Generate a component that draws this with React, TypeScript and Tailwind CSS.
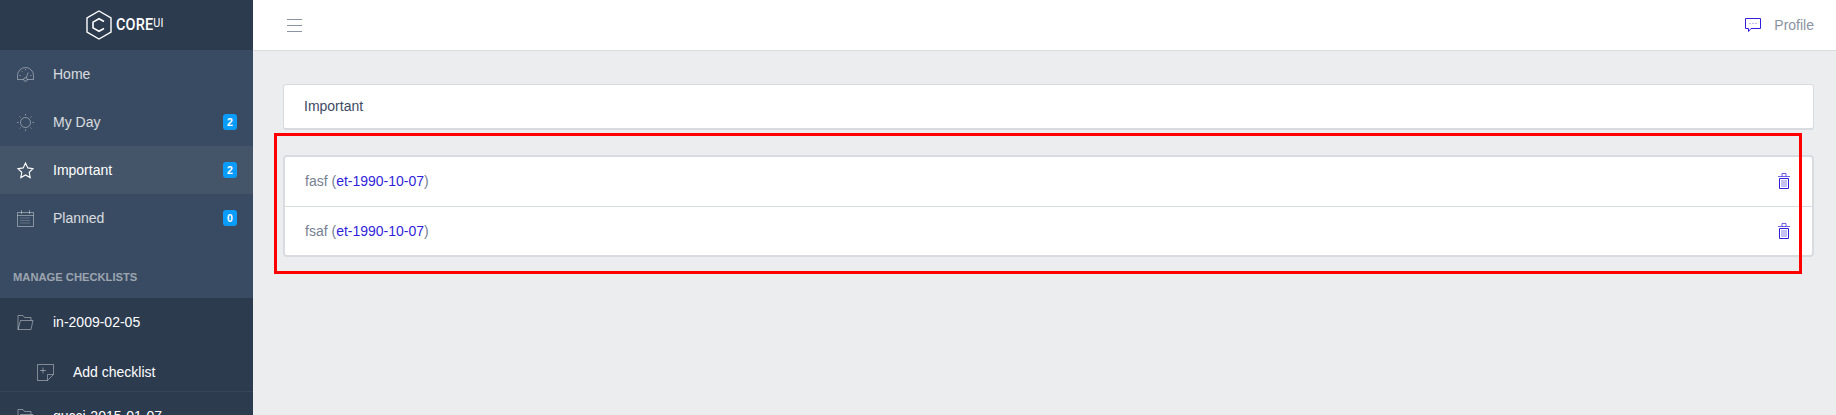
const iconClass = 'w-[17px] h-[17px] shrink-0';

function IconSpeedometer() {
  return (
    <svg viewBox="0 0 17 17" fill="none" stroke="currentColor" strokeWidth="1" className={iconClass}>
      <path d="M.5 13.5v-4a8 8 0 0 1 16 0v4H10.3M6.7 13.5H.5" />
      <circle cx="8.5" cy="13.5" r="1.8" />
      <path d="M9.2 11.8l2-5.3M2.5 9.5h1.2M13.3 9.5h1.2M4.5 5l.8.8M8.5 3v1.2" />
    </svg>
  );
}

function IconSun() {
  return (
    <svg viewBox="0 0 17 17" fill="none" stroke="currentColor" strokeWidth="1" className={iconClass}>
      <circle cx="8.5" cy="8.5" r="5" />
      <path d="M8.5 0v1.5M8.5 15.5V17M0 8.5h1.5M15.5 8.5H17M2.5 2.5l1 1M13.5 13.5l1 1M2.5 14.5l1-1M13.5 3.5l1-1" />
    </svg>
  );
}

function IconStar() {
  return (
    <svg viewBox="0 0 17 17" fill="none" stroke="currentColor" strokeWidth="1.1" className={iconClass}>
      <path d="M8.5 1l2.3 4.9 5.3.7-3.9 3.7 1 5.3-4.7-2.6-4.7 2.6 1-5.3L.9 6.6l5.3-.7z" />
    </svg>
  );
}

function IconCalendar() {
  return (
    <svg viewBox="0 0 17 17" fill="none" stroke="currentColor" strokeWidth="1" className={iconClass}>
      <path d="M.5 2.5h16v14H.5zM4.5 0v4M12.5 0v4M.5 5.5h16" />
      <path d="M3.5 8h10M3.5 10.5h10M3.5 13h10" strokeDasharray="1 1" />
    </svg>
  );
}

function IconFolder() {
  return (
    <svg viewBox="0 0 17 17" fill="none" stroke="currentColor" strokeWidth="1" className={iconClass}>
      <path d="M1 15.5V1.5h5l1.5 2H14V6.5" />
      <path d="M1 15.5h13L16 6.5H3.5z" />
    </svg>
  );
}

function IconNote() {
  return (
    <svg viewBox="0 0 17 17" fill="none" stroke="currentColor" strokeWidth="1" className={iconClass}>
      <path d="M10.5 16.5H.5V.5h16v10z" />
      <path d="M10.5 16.5v-6h6M6 3.5v6M3 6.5h6" />
    </svg>
  );
}

function IconTrash() {
  return (
    <svg viewBox="0 0 12 16" fill="none" stroke="#321fdb" strokeWidth="1" className="w-3 h-4 block">
      <path d="M0 3.5h12M4 3.5V.5h4v3" strokeOpacity="0.7" />
      <path d="M1.5 5.5h9v10h-9z" />
      <path d="M4 7v7M6 7v7M8 7v7" strokeOpacity="0.55" />
    </svg>
  );
}

function NavItem({ icon, label, badge, active }: { icon: React.ReactNode; label: string; badge?: number; active?: boolean }) {
  return (
    <div className={`h-12 shrink-0 flex items-center pl-[17px] pr-4 ${active ? 'bg-[#445569] text-white' : 'text-white/80'}`}>
      <span className={active ? 'text-white' : 'text-white/40'}>{icon}</span>
      <span className="ml-[19px] flex-1">{label}</span>
      {badge !== undefined && (
        <span className="w-3.5 h-4 rounded-[3px] bg-[#0a9cfb] text-white text-[10.5px] font-bold flex items-center justify-center">{badge}</span>
      )}
    </div>
  );
}

const todos = ['fasf', 'fsaf'];

export default function App() {
  return (
    <div className="relative flex h-[415px] overflow-hidden bg-[#ebedef] text-sm font-['Liberation_Sans',Arial,sans-serif]">
      <aside className="w-[253px] shrink-0 bg-[#394b62] flex flex-col">
        <div className="h-[50px] shrink-0 bg-[#2d3b4f] flex items-center justify-center text-white">
          <svg viewBox="0 0 26 30" fill="none" stroke="currentColor" className="w-[26px] h-[30px]">
            <path d="M13 1l12 7v14l-12 7-12-7V8z" strokeWidth="1.4" />
            <path d="M18 11.5l-5-2.8-6 3.4v5.8l6 3.4 5-2.8" strokeWidth="1.6" />
          </svg>
          <span className="ml-1 font-['Roboto',sans-serif] font-medium text-[16px] tracking-[0.2px] scale-x-90 origin-left w-[52px] whitespace-nowrap">
            CORE<span className="text-[12px] font-normal align-[3px]">UI</span>
          </span>
        </div>
        <NavItem icon={<IconSpeedometer />} label="Home" />
        <NavItem icon={<IconSun />} label="My Day" badge={2} />
        <NavItem icon={<IconStar />} label="Important" badge={2} active />
        <NavItem icon={<IconCalendar />} label="Planned" badge={0} />
        <div className="h-14 shrink-0 flex items-end pl-[13px] pb-[13px] text-[11.2px] font-bold text-white/50">MANAGE CHECKLISTS</div>
        <div className="flex-1 bg-[#2d3b4f]">
          <div className="h-12 flex items-center pl-[17px] text-white">
            <span className="text-white/40"><IconFolder /></span>
            <span className="ml-[19px]">in-2009-02-05</span>
          </div>
          <div className="h-[38px] mt-[7px] flex items-center pl-[37px] text-white border-b border-white/5 box-content">
            <span className="text-white/40"><IconNote /></span>
            <span className="ml-[19px]">Add checklist</span>
          </div>
          <div className="h-12 flex items-center pl-[17px] text-white">
            <span className="text-white/40"><IconFolder /></span>
            <span className="ml-[19px]">gucci-2015-01-07</span>
          </div>
        </div>
      </aside>

      <div className="flex-1 min-w-0 flex flex-col">
        <header className="h-[51px] shrink-0 bg-white border-b border-[#d8dbe0] flex items-center pl-[34px] pr-[22px]">
          <svg viewBox="0 0 15 13" stroke="#8a93a2" strokeWidth="1" className="w-[15px] h-[13px]">
            <path d="M0 .5h15M0 6.5h15M0 12.5h15" />
          </svg>
          <svg viewBox="0 0 16 16" fill="none" stroke="#321fdb" strokeWidth="1" className="ml-auto w-4 h-4">
            <path d="M.5 1.5h15v10H6l-2.5 3v-3h-3z" />
            <path d="M4.5 6.5h1M7.5 6.5h1M10.5 6.5h1" strokeOpacity="0.6" />
          </svg>
          <span className="ml-[13px] text-[#8a93a2]">Profile</span>
        </header>

        <main className="pt-[33px] pl-[30px] pr-[22px]">
          <div className="h-[46px] pb-[2px] bg-white border border-[#d8dbe0] border-b-2 rounded-[3px] flex items-center pl-[20px] text-[#3c4b64]">Important</div>
          <div className="mt-[25px] bg-white border-2 border-[#d8dbe0] rounded-[4px] text-[#768192]">
            {todos.map((t, i) => (
              <div key={t} className={`flex items-center pl-[20px] pr-[22px] ${i > 0 ? 'h-[49px] pb-px border-t border-[#d8dbe0]' : 'h-[49px] pb-[2px]'}`}>
                <span>
                  {t} (<span className="text-[#321fdb]">et-1990-10-07</span>)
                </span>
                <span className="ml-auto"><IconTrash /></span>
              </div>
            ))}
          </div>
        </main>
      </div>

      {/* red annotation drawn over the screenshot */}
      <div className="absolute left-[274px] top-[133px] w-[1528px] h-[141px] border-[3px] border-[#ff0000]" />
    </div>
  );
}
